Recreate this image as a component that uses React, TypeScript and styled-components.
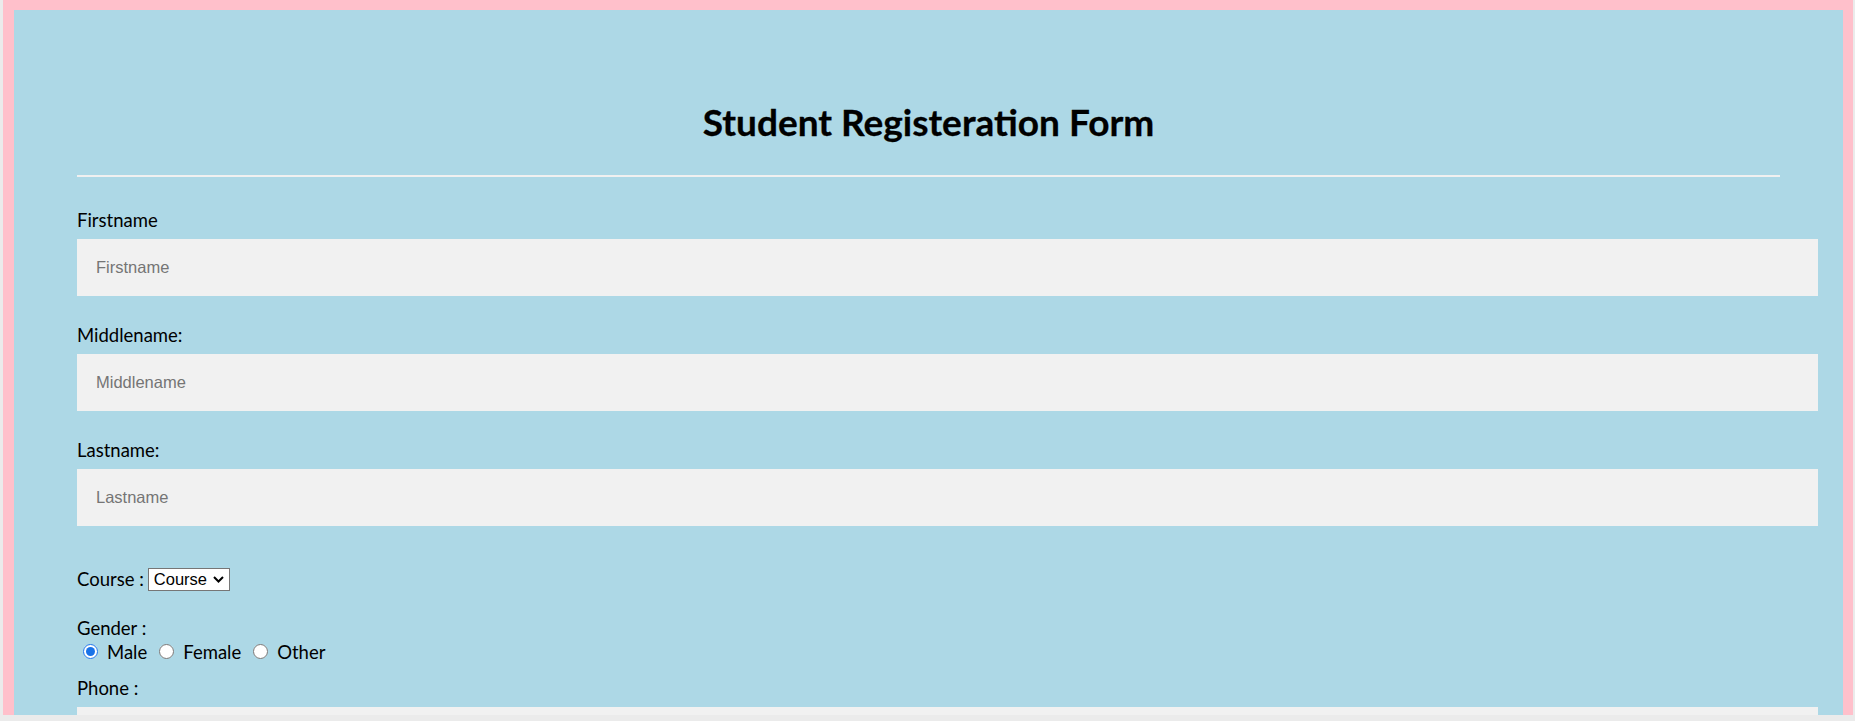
import React from "react";
import styled, { createGlobalStyle } from "styled-components";

const Global = createGlobalStyle`
  html, body {
    margin: 0;
    padding: 0;
    background: #ebebeb;
    overflow: hidden;
  }
  body {
    font-family: Lato, "Open Sans", sans-serif;
    color: #000;
  }
  * { box-sizing: border-box; }
`;

const Frame = styled.div`
  margin: 0 2px 0 3px;
  height: 715px;
  overflow: hidden;
  background: #ffc0cb;
  padding: 10px 10px 0 11px;
`;

const Panel = styled.form`
  background: #add8e6;
  height: 100%;
  padding: 90px 63px 0 63px;
  display: flex;
  flex-direction: column;
`;

const Title = styled.h1`
  margin: 0;
  font-family: Lato, sans-serif;
  font-weight: 700;
  font-size: 37px;
  line-height: 44px;
  text-align: center;
  -webkit-text-stroke: 0.3px #000;
`;

const Rule = styled.hr`
  margin: 31px 0 0 0;
  border: none;
  border-top: 2px solid #f0f0f0;
  height: 0;
`;

const Fields = styled.div`
  margin-top: 31.5px;
  display: flex;
  flex-direction: column;
`;

const Field = styled.div<{ $gap?: number }>`
  display: flex;
  flex-direction: column;
  margin-bottom: ${(p) => p.$gap ?? 28}px;
`;

const Label = styled.label`
  display: block;
  font-size: 18.5px;
  line-height: 22px;
  margin-bottom: 8px;
`;

const TextInput = styled.input`
  box-sizing: content-box;
  width: 100%;
  height: 57px;
  padding: 0 19px;
  border: none;
  outline: none;
  background: #f1f1f1;
  font-family: "Liberation Sans", Arial, sans-serif;
  font-size: 16.5px;
  color: #000;
  &::placeholder {
    color: #757575;
  }
`;

const InlineRow = styled.div`
  display: flex;
  align-items: center;
  gap: 4px;
  font-size: 18.5px;
  line-height: 22px;
  margin-top: 42px;
  margin-bottom: 26px;
`;

const SelectWrap = styled.span`
  position: relative;
  display: inline-flex;
`;

const Select = styled.select`
  appearance: none;
  -webkit-appearance: none;
  width: 82px;
  height: 23px;
  border: 1px solid #767676;
  border-radius: 0;
  background: #fff;
  padding: 0 0 0 5px;
  font-family: "Liberation Sans", Arial, sans-serif;
  font-size: 16.5px;
  color: #000;
  outline: none;
`;

const Chevron = styled.svg`
  position: absolute;
  right: 6px;
  top: 8px;
  width: 11px;
  height: 7px;
  pointer-events: none;
`;

const PlainLabel = styled.div`
  font-size: 18.5px;
  line-height: 22px;
`;

const RadioRow = styled.div`
  display: flex;
  align-items: center;
  gap: 6px;
  font-size: 18.5px;
  line-height: 24px;
  margin-top: 1px;
  margin-bottom: 13px;
`;

const RadioOption = styled.label`
  display: inline-flex;
  align-items: center;
`;

const Radio = styled.input`
  width: 15px;
  height: 15px;
  margin: 0 9px 0 6px;
  accent-color: #1a73e8;
`;

export default function App() {
  return (
    <>
      <Global />
      <Frame>
        <Panel onSubmit={(e) => e.preventDefault()}>
          <Title>Student Registeration Form</Title>
          <Rule />
          <Fields>
            <Field>
              <Label>Firstname</Label>
              <TextInput type="text" placeholder="Firstname" />
            </Field>
            <Field>
              <Label>Middlename:</Label>
              <TextInput type="text" placeholder="Middlename" />
            </Field>
            <Field $gap={0}>
              <Label>Lastname:</Label>
              <TextInput type="text" placeholder="Lastname" />
            </Field>
            <InlineRow>
              <span>Course :</span>
              <SelectWrap>
                <Select defaultValue="Course">
                  <option value="Course">Course</option>
                  <option value="BCA">BCA</option>
                  <option value="BBA">BBA</option>
                  <option value="B.Tech">B.Tech</option>
                </Select>
                <Chevron viewBox="0 0 11 7">
                  <path d="M1 1 L5.5 5.5 L10 1" fill="none" stroke="#000" strokeWidth="2" />
                </Chevron>
              </SelectWrap>
            </InlineRow>
            <PlainLabel>Gender :</PlainLabel>
            <RadioRow>
              <RadioOption>
                <Radio type="radio" name="gender" defaultChecked />
                Male
              </RadioOption>
              <RadioOption>
                <Radio type="radio" name="gender" />
                Female
              </RadioOption>
              <RadioOption>
                <Radio type="radio" name="gender" />
                Other
              </RadioOption>
            </RadioRow>
            <Field>
              <Label>Phone :</Label>
              <TextInput type="text" placeholder="phone no." />
            </Field>
          </Fields>
        </Panel>
      </Frame>
    </>
  );
}
